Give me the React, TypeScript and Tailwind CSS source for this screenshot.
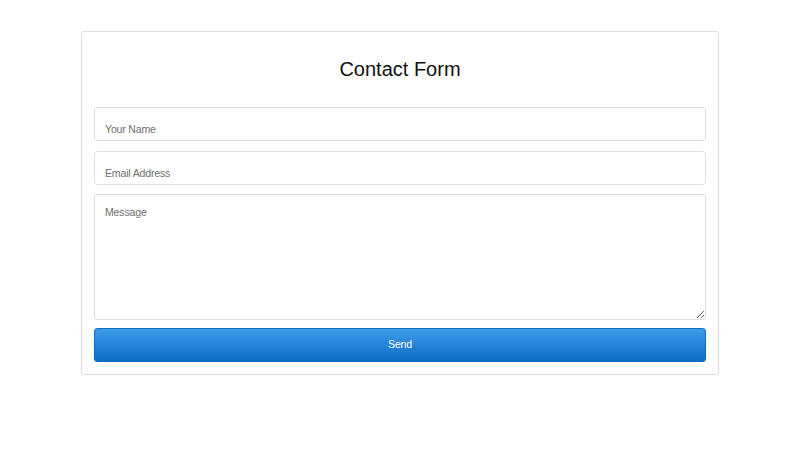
import React from "react";

export default function App() {
  return (
    <div className="min-h-[450px] w-[800px] bg-white pt-[31px]" style={{ fontFamily: '"Liberation Sans", Arial, sans-serif' }}>
      <div className="mx-auto w-[638px] rounded-[3px] border border-[#dcdcdc] bg-white p-[12px] shadow-[0_0_2px_rgba(0,0,0,0.04)]">
        <h2 className="mt-[13px] mb-[26px] text-center text-[20px] leading-[24px] text-[#111]">Contact Form</h2>
        <form className="flex flex-col" onSubmit={(e) => e.preventDefault()}>
          <input
            type="text"
            placeholder="Your Name"
            className="h-[34px] w-full rounded-[3px] border border-[#dedede] bg-white px-[10px] pt-[9px] text-[10.6px] leading-[13px] tracking-[-0.2px] text-[#333] outline-none placeholder:text-[#707070]"
          />
          <input
            type="email"
            placeholder="Email Address"
            className="mt-[10px] h-[34px] w-full rounded-[3px] border border-[#dedede] bg-white px-[10px] pt-[9px] text-[10.6px] leading-[13px] tracking-[-0.2px] text-[#333] outline-none placeholder:text-[#707070]"
          />
          <textarea
            placeholder="Message"
            className="mt-[9px] h-[126px] w-full resize-y rounded-[3px] border border-[#dedede] bg-white px-[10px] pt-[11px] text-[10.6px] leading-[13px] tracking-[-0.2px] text-[#333] outline-none placeholder:text-[#707070]"
          />
          <button
            type="submit"
            className="mt-[8px] h-[34px] w-full rounded-[3px] border border-[#0f6fc4] bg-gradient-to-b from-[#3c9aea] to-[#0a6dc4] text-[10.6px] tracking-[-0.2px] text-white"
          >
            Send
          </button>
        </form>
      </div>
    </div>
  );
}
